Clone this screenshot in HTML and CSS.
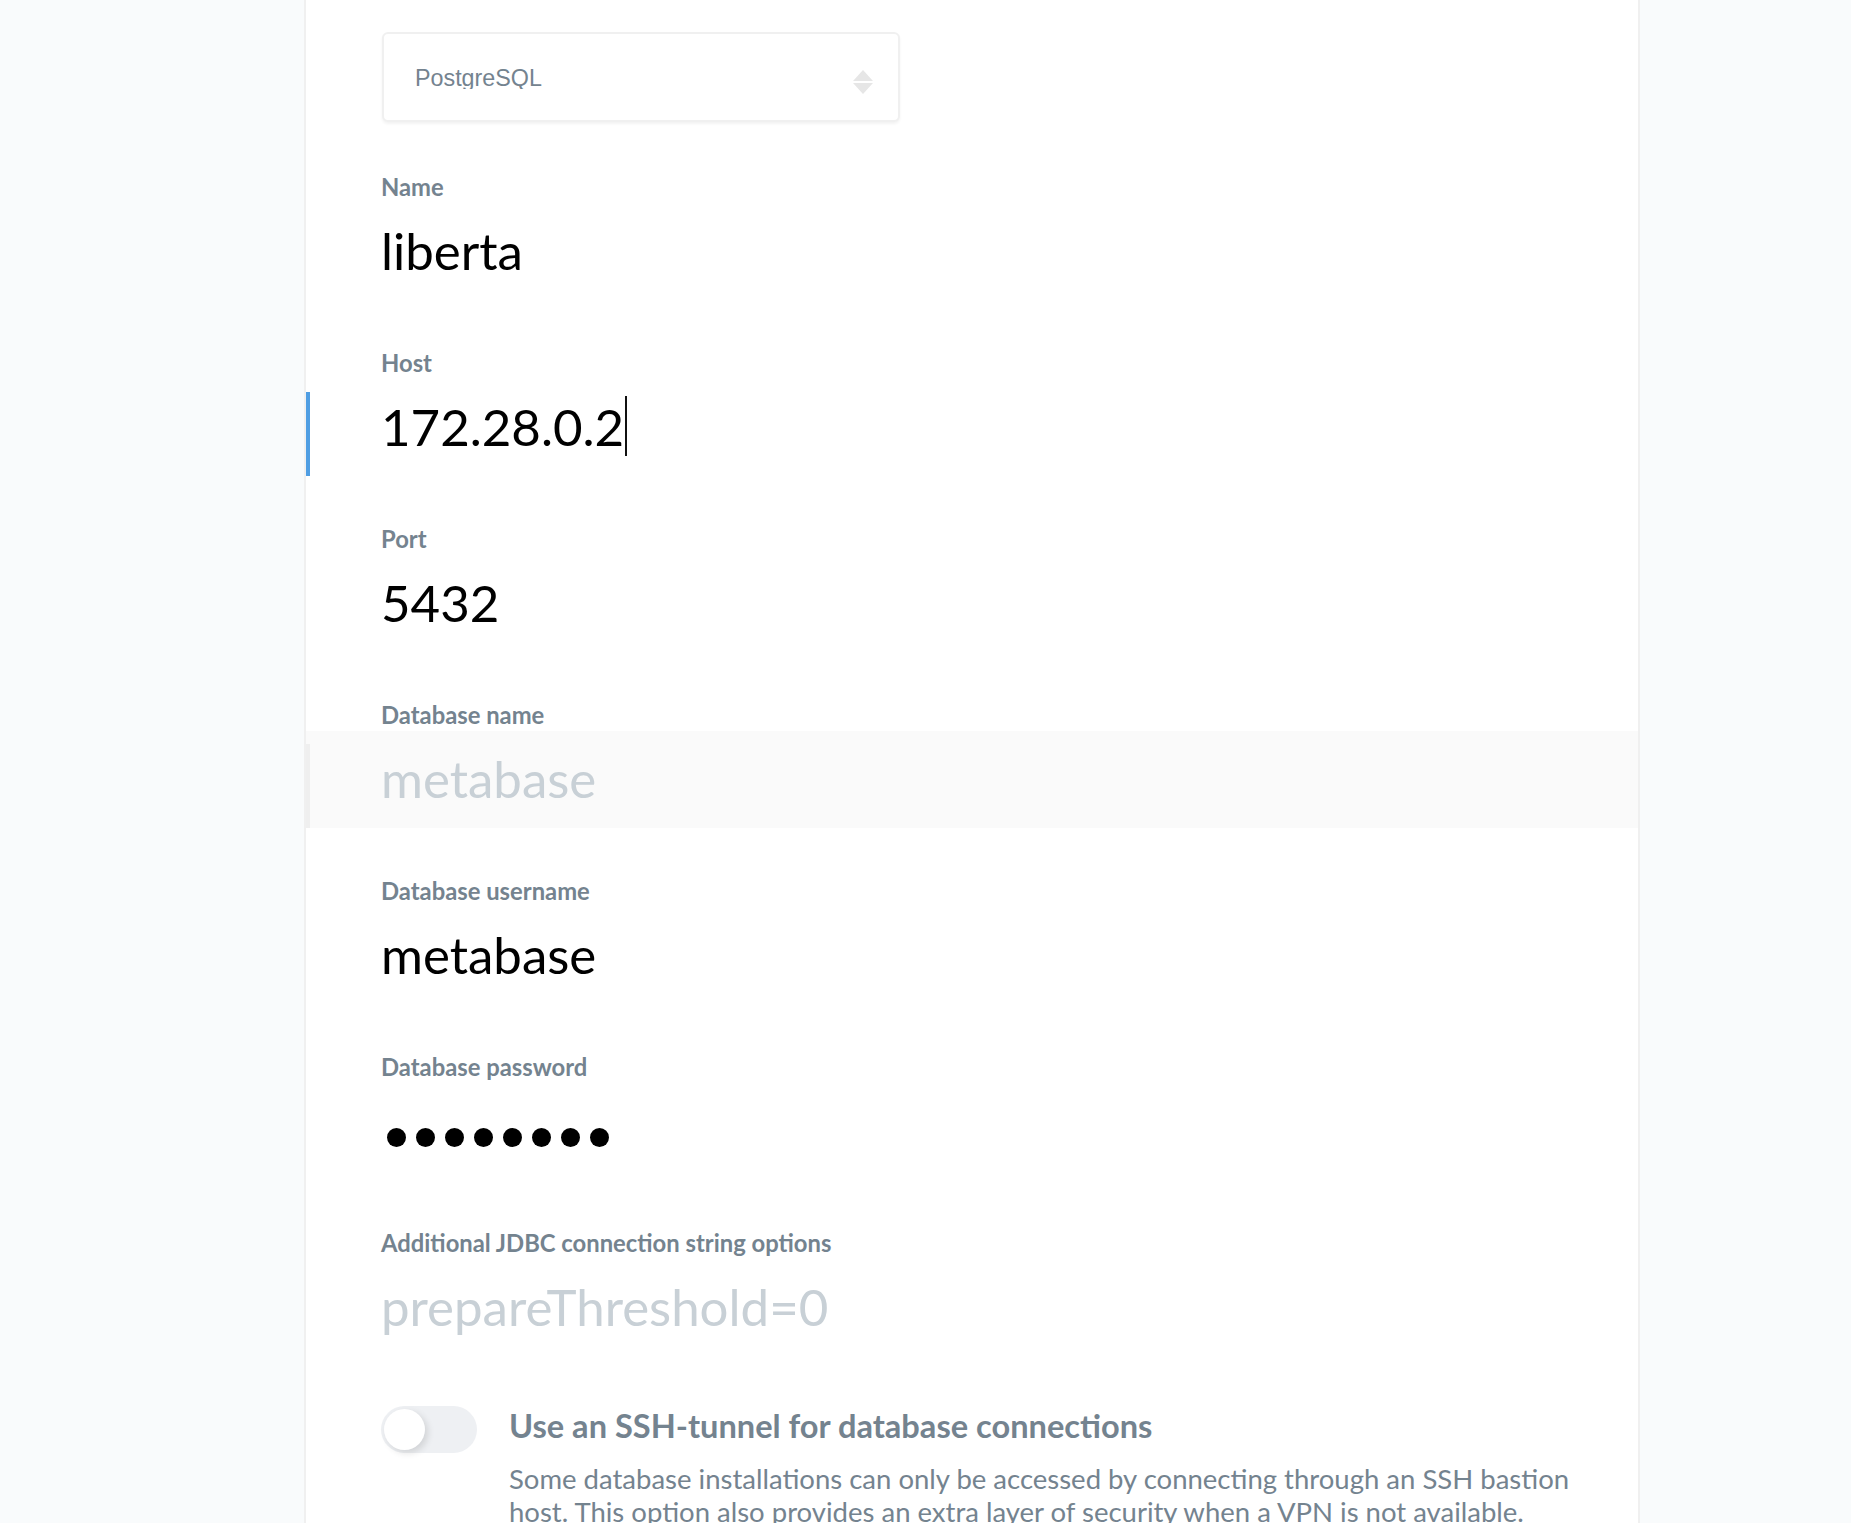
FILE: index.html
```html
<!DOCTYPE html>
<html lang="en">
<head>
<meta charset="utf-8">
<title>Edit database</title>
<link rel="stylesheet" href="styles.css">
</head>
<body>
<div class="page">
  <main class="panel">
    <div class="select-field">
      <div class="select">
        <span class="select-text">PostgreSQL</span>
        <svg class="select-arrows" width="20" height="24" viewBox="0 0 20 24" aria-hidden="true">
          <path d="M10 0 L20 11 L0 11 Z"/>
          <path d="M0 13 L20 13 L10 24 Z"/>
        </svg>
      </div>
    </div>

    <div class="field field-first">
      <div class="field-label">Name</div>
      <div class="input-wrap"><div class="input">liberta</div></div>
    </div>

    <div class="field">
      <div class="field-label">Host</div>
      <div class="input-wrap"><div class="input is-focused">172.28.0.2<span class="caret"></span></div></div>
    </div>

    <div class="field">
      <div class="field-label">Port</div>
      <div class="input-wrap"><div class="input">5432</div></div>
    </div>

    <div class="field">
      <div class="field-label">Database name</div>
      <div class="input-wrap is-hover"><div class="input is-placeholder">metabase</div></div>
    </div>

    <div class="field">
      <div class="field-label">Database username</div>
      <div class="input-wrap"><div class="input">metabase</div></div>
    </div>

    <div class="field">
      <div class="field-label">Database password</div>
      <div class="input-wrap">
        <div class="input" aria-label="password">
          <span class="dot"></span><span class="dot"></span><span class="dot"></span><span class="dot"></span><span class="dot"></span><span class="dot"></span><span class="dot"></span><span class="dot"></span>
        </div>
      </div>
    </div>

    <div class="field">
      <div class="field-label">Additional JDBC connection string options</div>
      <div class="input-wrap"><div class="input is-placeholder">prepareThreshold=0</div></div>
    </div>

    <div class="toggle-row">
      <div class="toggle"><span class="knob"></span></div>
      <div class="toggle-text">
        <div class="toggle-title">Use an SSH-tunnel for database connections</div>
        <p class="toggle-desc">Some database installations can only be accessed by connecting through an SSH bastion host. This option also provides an extra layer of security when a VPN is not available. Enabling this is usually slower than a direct connection.</p>
      </div>
    </div>
  </main>
</div>
</body>
</html>
```

FILE: styles.css
```css
* { box-sizing: border-box; }
html, body { margin: 0; padding: 0; }
body {
  background: #f9fbfc;
  font-family: Lato, "Noto Sans", sans-serif;
  color: #000;
}
.page { min-height: 100vh; }

.panel {
  margin-left: 304px;
  width: 1336px;
  min-height: 100vh;
  background: #fff;
  border-left: 2px solid #f0f0f0;
  border-right: 2px solid #f0f0f0;
  padding-top: 32px;
  padding-bottom: 60px;
}

/* select */
.select-field { padding-left: 76px; }
.select {
  width: 518px;
  height: 90px;
  border: 2px solid #f0f0f0;
  border-radius: 6px;
  box-shadow: 0 2px 3px rgba(0, 0, 0, 0.05);
  display: flex;
  align-items: center;
  justify-content: space-between;
  padding: 0 25px 0 31px;
  background: #fff;
}
.select-text {
  display: block;
  height: 24px;
  overflow: hidden;
  font-family: "Liberation Sans", Arial, sans-serif;
  font-size: 23.3px;
  line-height: normal;
  color: #74838f;
}
.select-arrows { fill: #e6e6e6; margin-top: 10px; }

/* fields */
.field { margin-top: 49px; }
.field-first { margin-top: 51px; }
.field-label {
  padding-left: 75px;
  font-weight: 700;
  font-size: 23.8px;
  line-height: 28px;
  color: #74838f;
}
.input-wrap { margin-top: 2px; padding-top: 13px; }
.input-wrap.is-hover { background: #fafafa; }
.input {
  height: 84px;
  border-left: 4px solid transparent;
  padding: 4px 0 0 71px;
  font-size: 51px;
  line-height: 61px;
  color: #000;
  white-space: nowrap;
}
.input.is-focused { border-left-color: #509ee3; }
.is-hover .input { border-left-color: #efefef; }
.input.is-placeholder { color: #c8d0d6; }

.caret {
  display: inline-block;
  width: 2px;
  height: 60px;
  margin-left: 1px;
  background: #111;
  vertical-align: top;
}

.dot {
  display: inline-block;
  width: 19px;
  height: 19px;
  border-radius: 50%;
  background: #000;
  margin-right: 10px;
  vertical-align: middle;
}
.dot:first-child { margin-left: 6px; }

/* toggle */
.toggle-row {
  margin-top: 50px;
  padding-left: 75px;
  display: flex;
  align-items: flex-start;
}
.toggle {
  flex: none;
  width: 96px;
  height: 47px;
  border-radius: 24px;
  background: #eef0f3;
  padding: 3px;
  display: flex;
}
.knob {
  width: 41px;
  height: 41px;
  border-radius: 50%;
  background: #fff;
  box-shadow: 3px 3px 7px rgba(0, 0, 0, 0.12);
}
.toggle-text { margin-left: 32px; margin-top: 2px; width: 1100px; }
.toggle-title {
  font-weight: 700;
  font-size: 32.6px;
  line-height: 36px;
  color: #74838f;
}
.toggle-desc {
  margin: 18px 0 0;
  font-size: 27.5px;
  line-height: 33px;
  color: #74838f;
}
```
